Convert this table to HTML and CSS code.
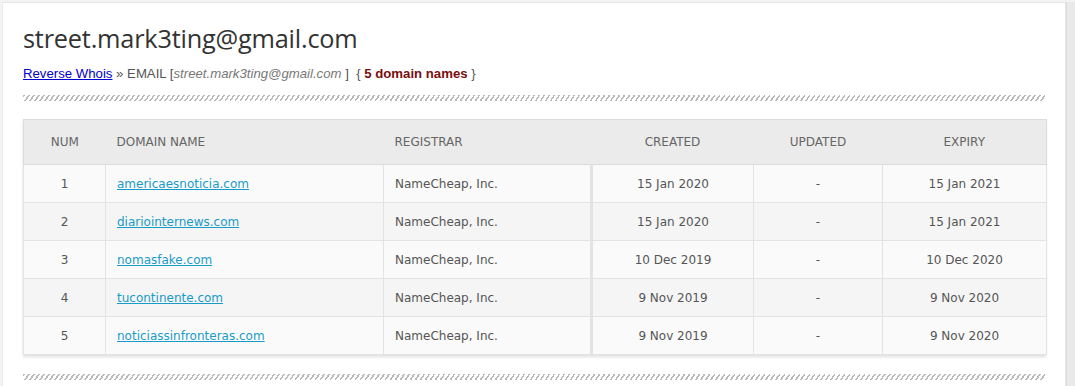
FILE: index.html
```html
<!DOCTYPE html>
<html>
<head>
<meta charset="utf-8">
<link rel="stylesheet" href="styles.css">
</head>
<body>
<div class="page">
  <div class="panel">
    <h1 class="title">street.mark3ting@gmail.com</h1>
    <div class="crumbs"><a href="#" class="crumb-link">Reverse Whois</a> » EMAIL [<i class="em">street.mark3ting@gmail.com</i> ] &nbsp;{ <b class="count">5 domain names</b> }</div>
    <div class="hatch"></div>
    <div class="table-wrap">
      <table class="domains">
        <colgroup>
          <col class="w-num"><col class="w-dom"><col class="w-reg"><col class="w-cre"><col class="w-upd"><col class="w-exp">
        </colgroup>
        <thead>
          <tr>
            <th>NUM</th>
            <th class="left">DOMAIN NAME</th>
            <th class="left">REGISTRAR</th>
            <th>CREATED</th>
            <th>UPDATED</th>
            <th>EXPIRY</th>
          </tr>
        </thead>
        <tbody>
          <tr class="odd"><td>1</td><td class="left"><a href="#">americaesnoticia.com</a></td><td class="left">NameCheap, Inc.</td><td class="c-cre">15 Jan 2020</td><td>-</td><td>15 Jan 2021</td></tr>
          <tr class="even"><td>2</td><td class="left"><a href="#">diariointernews.com</a></td><td class="left">NameCheap, Inc.</td><td class="c-cre">15 Jan 2020</td><td>-</td><td>15 Jan 2021</td></tr>
          <tr class="odd"><td>3</td><td class="left"><a href="#">nomasfake.com</a></td><td class="left">NameCheap, Inc.</td><td class="c-cre">10 Dec 2019</td><td>-</td><td>10 Dec 2020</td></tr>
          <tr class="even"><td>4</td><td class="left"><a href="#">tucontinente.com</a></td><td class="left">NameCheap, Inc.</td><td class="c-cre">9 Nov 2019</td><td>-</td><td>9 Nov 2020</td></tr>
          <tr class="odd"><td>5</td><td class="left"><a href="#">noticiassinfronteras.com</a></td><td class="left">NameCheap, Inc.</td><td class="c-cre">9 Nov 2019</td><td>-</td><td>9 Nov 2020</td></tr>
        </tbody>
      </table>
    </div>
    <div class="hatch hatch-bottom"></div>
  </div>
  <div class="side"></div>
</div>
</body>
</html>
```

FILE: styles.css
```css
html, body {
  margin: 0;
  padding: 0;
  background: #f3f3f3;
  height: 386px;
  overflow: hidden;
}
.page {
  display: flex;
  padding: 2px 0 0 2px;
  height: 384px;
}
.panel {
  width: 1064px;
  background: #fff;
  border-top: 1px solid #e6e6e6;
  border-left: 1px solid #ececec;
  border-right: 1px solid #e4e4e4;
  padding: 0 20px 0 20px;
  box-sizing: border-box;
  flex: none;
}
.side {
  flex: 1;
  background: #e9e9e9;
  border-left: 1px solid #dcdcdc;
}
.title {
  font-family: "Open Sans", "DejaVu Sans", sans-serif;
  font-weight: 400;
  font-size: 25.3px;
  color: #333;
  margin: 18px 0 0 0;
  line-height: 34px;
  letter-spacing: -0.2px;
}
.crumbs {
  font-family: "Liberation Sans", Arial, sans-serif;
  font-size: 13.2px;
  color: #555;
  margin-top: 11px;
  line-height: 16px;
}
.crumb-link {
  color: #0000cc;
}
.em {
  color: #777;
}
.count {
  color: #7a0e0e;
}
.hatch {
  margin-top: 13px;
  height: 6px;
  width: 1022px;
  background: repeating-linear-gradient(-55deg, transparent 0 2.6px, #b9b9b9 2.6px 4.1px);
}
.hatch-bottom {
  margin-top: 19px;
}
.table-wrap {
  margin-top: 18px;
  width: 1023px;
  box-shadow: 0 2px 3px rgba(0,0,0,0.13);
}
.domains {
  width: 1023px;
  table-layout: fixed;
  border-collapse: collapse;
  font-family: "DejaVu Sans", Verdana, sans-serif;
  font-size: 12px;
  color: #555;
  border: 1px solid #dddddd;
}
.w-num { width: 82px; }
.w-dom { width: 278px; }
.w-reg { width: 208px; }
.w-cre { width: 162px; }
.w-upd { width: 129px; }
.w-exp { width: 164px; }
.domains th {
  background: #ebebeb;
  font-weight: 400;
  color: #666;
  height: 44px;
  padding: 0 11px;
  text-align: center;
  border-bottom: 1px solid #dcdcdc;
}
.domains td {
  height: 37px;
  padding: 0 11px;
  text-align: center;
  border: 1px solid #e3e3e3;
  border-top: 0;
}
.domains tr.odd td { background: #fafafa; }
.domains tr.even td { background: #f5f5f5; }
.domains .left { text-align: left; }
.domains td.c-cre { border-left: 3px solid #e3e3e3; }
.domains a {
  color: #1a9bc7;
  text-decoration: underline;
}
```
